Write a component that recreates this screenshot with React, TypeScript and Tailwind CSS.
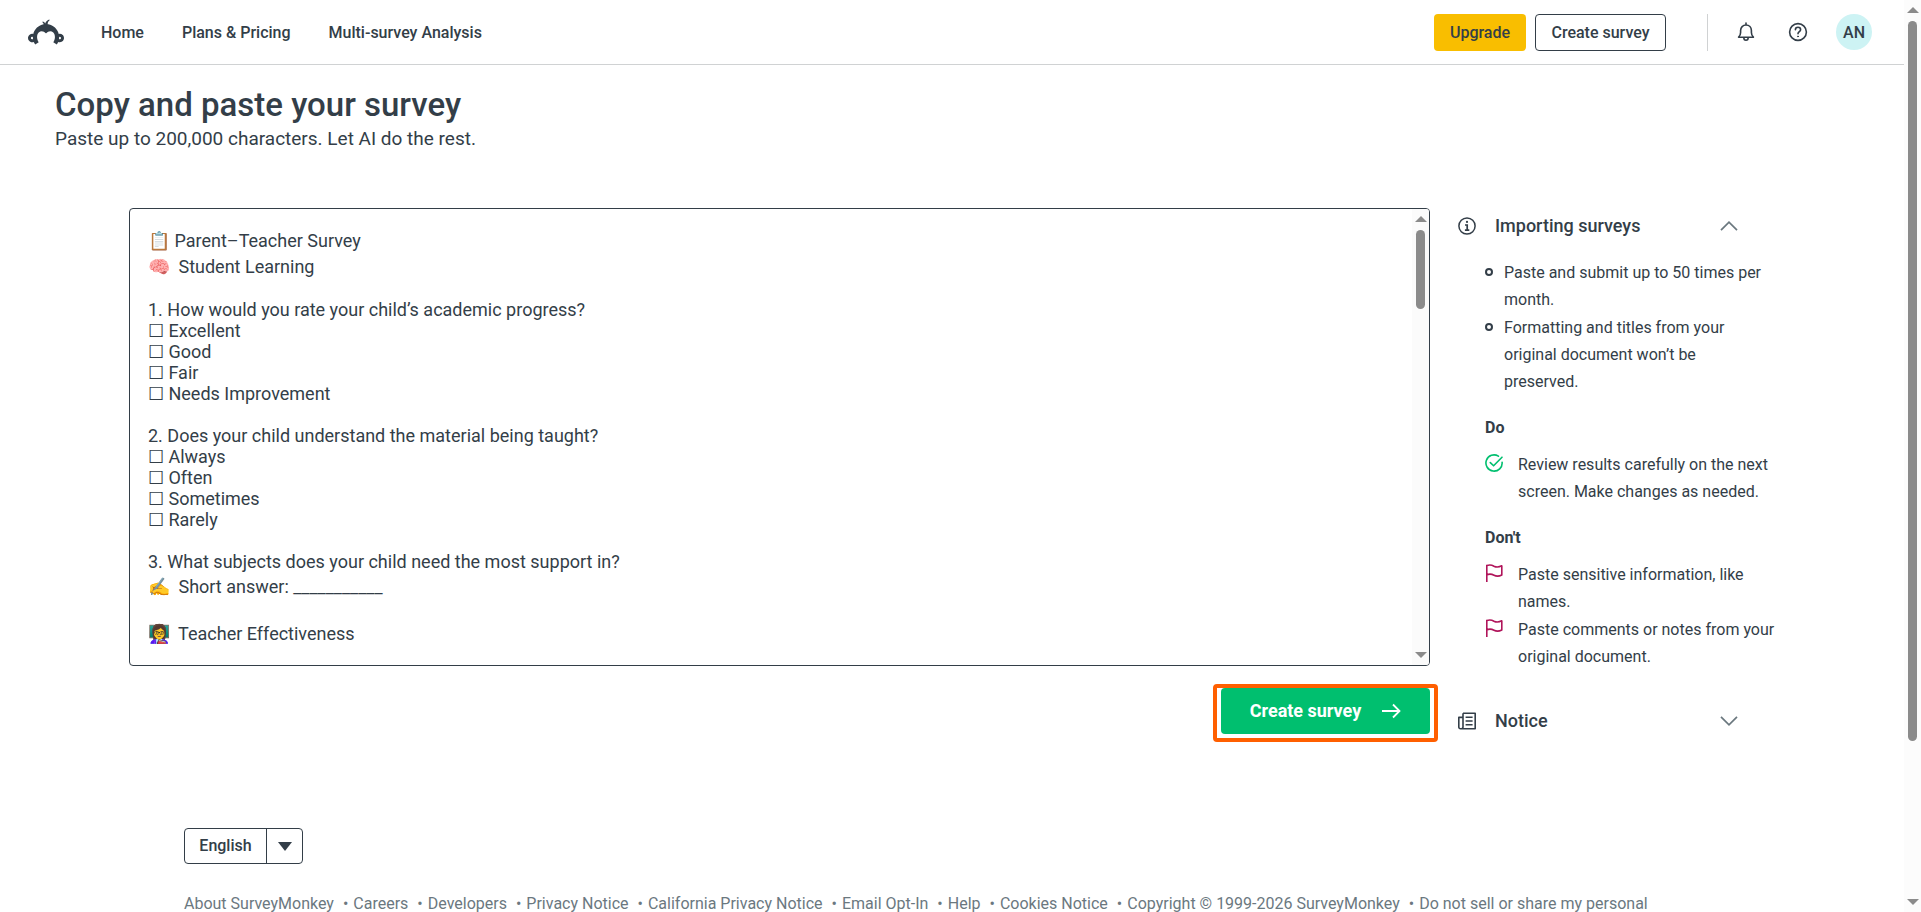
import { useState } from 'react'
import { SiSurveymonkey } from 'react-icons/si'

const NAV = ['Home', 'Plans & Pricing', 'Multi-survey Analysis']

const FOOTER_LINKS = [
  'About SurveyMonkey',
  'Careers',
  'Developers',
  'Privacy Notice',
  'California Privacy Notice',
  'Email Opt-In',
  'Help',
  'Cookies Notice',
  'Copyright © 1999-2026 SurveyMonkey',
  'Do not sell or share my personal',
]

// the wide space (\u3000) ending the emoji lines makes them a bit taller than the rest
const SURVEY = `📋 Parent–Teacher Survey\u3000
🧠\u205f Student Learning\u3000

1. How would you rate your child’s academic progress?
☐ Excellent
☐ Good
☐ Fair
☐ Needs Improvement

2. Does your child understand the material being taught?
☐ Always
☐ Often
☐ Sometimes
☐ Rarely

3. What subjects does your child need the most support in?
✍️\u205f Short answer: ___________\u3000

👩‍🏫\u205f Teacher Effectiveness\u3000`

function BellIcon() {
  return (
    <svg viewBox="0 0 18 20" className="w-[18px] h-5" fill="none" stroke="currentColor" strokeWidth="1.6" strokeLinejoin="round">
      <path d="M9 1v2M1.6 15.2c1.4-1.2 2-2.6 2-4.6V8.6C3.6 5.4 5.9 3 9 3s5.4 2.4 5.4 5.6v2c0 2 .6 3.4 2 4.6z" strokeLinecap="round" />
      <path d="M6.8 15.6c0 1.8.9 2.7 2.2 2.7s2.2-.9 2.2-2.7" />
    </svg>
  )
}

function HelpIcon() {
  return (
    <svg viewBox="0 0 20 20" className="w-5 h-5" fill="none" stroke="currentColor" strokeWidth="1.6" strokeLinecap="round">
      <circle cx="10" cy="10" r="8.4" />
      <path d="M7.4 7.8c0-1.5 1.1-2.5 2.6-2.5s2.6 1 2.6 2.4c0 1.9-2.6 2-2.6 4.1" />
      <circle cx="10" cy="14.4" r=".5" fill="currentColor" strokeWidth="1" />
    </svg>
  )
}

function InfoIcon() {
  return (
    <svg viewBox="0 0 18 18" className="w-[18px] h-[18px]" fill="none" stroke="currentColor" strokeWidth="1.5">
      <circle cx="9" cy="9" r="8.1" />
      <path d="M7 8h2.2v5M6.9 13.2h4.4" strokeWidth="1.7" />
      <circle cx="9" cy="4.9" r="1.1" fill="currentColor" stroke="none" />
    </svg>
  )
}

function CheckIcon() {
  return (
    <svg viewBox="0 0 18 18" className="w-[18px] h-[18px]" fill="none" stroke="currentColor" strokeWidth="1.6" strokeLinecap="round" strokeLinejoin="round">
      <path d="M13.4 2.2A8.1 8.1 0 1 0 17.1 8.2" />
      <path d="M5.3 8.6 8.6 11.8 17 3.2" />
    </svg>
  )
}

function FlagIcon() {
  return (
    <svg viewBox="0 0 18 18" className="w-[18px] h-[18px]" fill="none" stroke="currentColor" strokeWidth="1.6" strokeLinejoin="round">
      <path d="M1.8 18V.8M1.800 1.600C4.500.4 7 1 9 2.200c2.200 1.200 4.800 1.200 7.800-.4v9.200c-3 1.500-5.600 1.400-7.800.2-2-1.100-4.500-1.600-7.200-.4" />
    </svg>
  )
}

function NewsIcon() {
  return (
    <svg viewBox="0 0 18 18" className="w-[18px] h-[18px]" fill="none" stroke="currentColor" strokeWidth="1.6" strokeLinejoin="round">
      <path d="M5 1.3h12.2v15.4H2.5C1.5 16.7.8 16 .8 15V5.4H5M5 1.3V15c0 1-.8 1.7-1.8 1.7" />
      <path d="M7.6 5.3h7M7.6 9h7M7.6 12.7h7" />
    </svg>
  )
}

function Chevron({ up = false }: { up?: boolean }) {
  return (
    <svg viewBox="0 0 18 10" className="w-[18px] h-[10px] text-[#6b787f]" fill="none" stroke="currentColor" strokeWidth="1.7">
      <path d={up ? 'M1 9.2l8-8 8 8' : 'M1 .8l8 8 8-8'} />
    </svg>
  )
}

function Arrow({ down = false }: { down?: boolean }) {
  return (
    <svg viewBox="0 0 12 6" className="w-3 h-[6px] shrink-0 fill-[#8b8b8b]">
      <path d={down ? 'M0 0h12L6 6z' : 'M0 6h12L6 0z'} />
    </svg>
  )
}

export default function App() {
  const [text, setText] = useState(SURVEY)

  return (
    <div className="flex h-screen overflow-hidden bg-white font-[Roboto,sans-serif] text-[#333e48]">
      <div className="flex-1 min-w-0 h-full overflow-hidden">
        <header className="flex items-center h-[65px] pl-7 pr-8 border-b border-[#d0d2d3]">
          <a href="#" aria-label="SurveyMonkey home"><SiSurveymonkey className="w-9 h-9" /></a>
          <nav className="flex gap-[38px] ml-[37px] pt-0.5 text-base font-medium">
            {NAV.map(n => <a key={n} href="#">{n}</a>)}
          </nav>
          <div className="flex items-center ml-auto">
            <button className="h-[37px] w-[92px] pt-0.5 rounded bg-[#f9be00] text-base font-medium">Upgrade</button>
            <button className="h-[37px] w-[131px] pt-0.5 ml-[9px] rounded border border-[#333e48] text-base font-medium">Create survey</button>
            <div className="w-px h-[37px] ml-[41px] bg-[#d0d2d3]" />
            <button aria-label="Notifications" className="ml-[29px]"><BellIcon /></button>
            <button aria-label="Help" className="ml-[33px]"><HelpIcon /></button>
            <button className="w-9 h-9 ml-7 pt-0.5 rounded-full bg-[#cdf3f4] text-base font-medium">AN</button>
          </div>
        </header>

        <div className="pt-5 pl-[55px]">
          <h1 className="text-[33px] leading-[40px] font-medium">Copy and paste your survey</h1>
          <p className="text-[19px] leading-7">Paste up to 200,000 characters. Let AI do the rest.</p>
        </div>

        <main className="flex gap-7 px-[129px] mt-[55px]">
          <div className="flex-1 min-w-0">
            <div className="flex h-[458px] rounded border border-[#333e48] overflow-hidden">
              <textarea
                aria-label="Survey text"
                value={text}
                onChange={e => setText(e.target.value)}
                className="flex-1 resize-none overflow-hidden outline-none pt-[17px] pl-[18px] font-[Roboto,'Noto_Sans_CJK_JP',sans-serif] text-lg leading-[normal]"
              />
              <div className="flex flex-col items-center w-[17px] py-[7px] bg-[#fbfbfb]">
                <Arrow />
                <div className="w-[9px] h-[79px] mt-2 rounded-full bg-[#8b8b8b]" />
                <div className="flex-1" />
                <Arrow down />
              </div>
            </div>
            <div className="flex justify-end mt-[18px] -mr-2">
              <div className="px-1 pb-1 border-4 border-[#ff5f00] rounded-sm">
                <button className="flex items-center justify-center gap-5 w-[209px] h-[46px] rounded bg-[#00bf6f] text-lg font-bold text-white">
                  Create survey
                  <svg viewBox="0 0 20 16" className="w-5 h-4" fill="none" stroke="currentColor" strokeWidth="1.8">
                    <path d="M1 8h17M12 1.5 18.5 8 12 14.5" />
                  </svg>
                </button>
              </div>
            </div>
          </div>

          <aside className="w-[317px] pt-1">
            <button className="flex items-center w-full pr-[37px] h-[27px] text-lg font-medium">
              <InfoIcon />
              <span className="ml-[19px] mr-auto">Importing surveys</span>
              <Chevron up />
            </button>
            <ul className="mt-5 pl-[27px] pr-2 leading-[27px] space-y-px">
              {['Paste and submit up to 50 times per month.', 'Formatting and titles from your original document won’t be preserved.'].map(t => (
                <li key={t} className="flex">
                  <span className="w-2 h-2 mt-[9px] mr-[11px] shrink-0 rounded-full border-2 border-[#333e48]" />
                  {t}
                </li>
              ))}
            </ul>
            <div className="pl-[27px] leading-[27px]">
              <h3 className="mt-[19px] mb-[10px] font-bold">Do</h3>
              <p className="flex gap-[15px]">
                <span className="pt-[3px] text-[#00bf6f]"><CheckIcon /></span>
                Review results carefully on the next screen. Make changes as needed.
              </p>
              <h3 className="mt-[19px] mb-[10px] font-bold">Don't</h3>
              <p className="flex gap-[15px]">
                <span className="pt-[3px] text-[#b0145a]"><FlagIcon /></span>
                Paste sensitive information, like names.
              </p>
              <p className="flex gap-[15px] mt-px">
                <span className="pt-[3px] text-[#b0145a]"><FlagIcon /></span>
                Paste comments or notes from your original document.
              </p>
            </div>
            <button className="flex items-center w-full pr-[37px] mt-[37px] h-[27px] text-lg font-medium">
              <NewsIcon />
              <span className="ml-[19px] mr-auto">Notice</span>
              <Chevron />
            </button>
          </aside>
        </main>

        <footer className="px-[184px] mt-[86px]">
          <button className="flex items-center h-9 rounded border border-[#333e48] text-base font-medium">
            <span className="w-[81px]">English</span>
            <span className="flex items-center justify-center w-9 h-full border-l border-[#333e48]">
              <svg viewBox="0 0 14 9" className="w-[14px] h-[9px] fill-current"><path d="M0 0h14L7 9z" /></svg>
            </span>
          </button>
          <div className="flex flex-wrap mt-7 leading-6 text-[#6b787f]">
            {FOOTER_LINKS.map((l, i) => (
              <span key={l} className="whitespace-nowrap">
                {i > 0 && <span className="ml-[9px] mr-[5px]">•</span>}
                <a href="#">{l}</a>
              </span>
            ))}
          </div>
        </footer>
      </div>

      <div className="flex flex-col items-center w-[17px] py-[7px] bg-[#fcfcfc]">
        <Arrow />
        <div className="w-[9px] h-[720px] mt-2 rounded-full bg-[#8b8b8b]" />
        <div className="flex-1" />
        <Arrow down />
      </div>
    </div>
  )
}
